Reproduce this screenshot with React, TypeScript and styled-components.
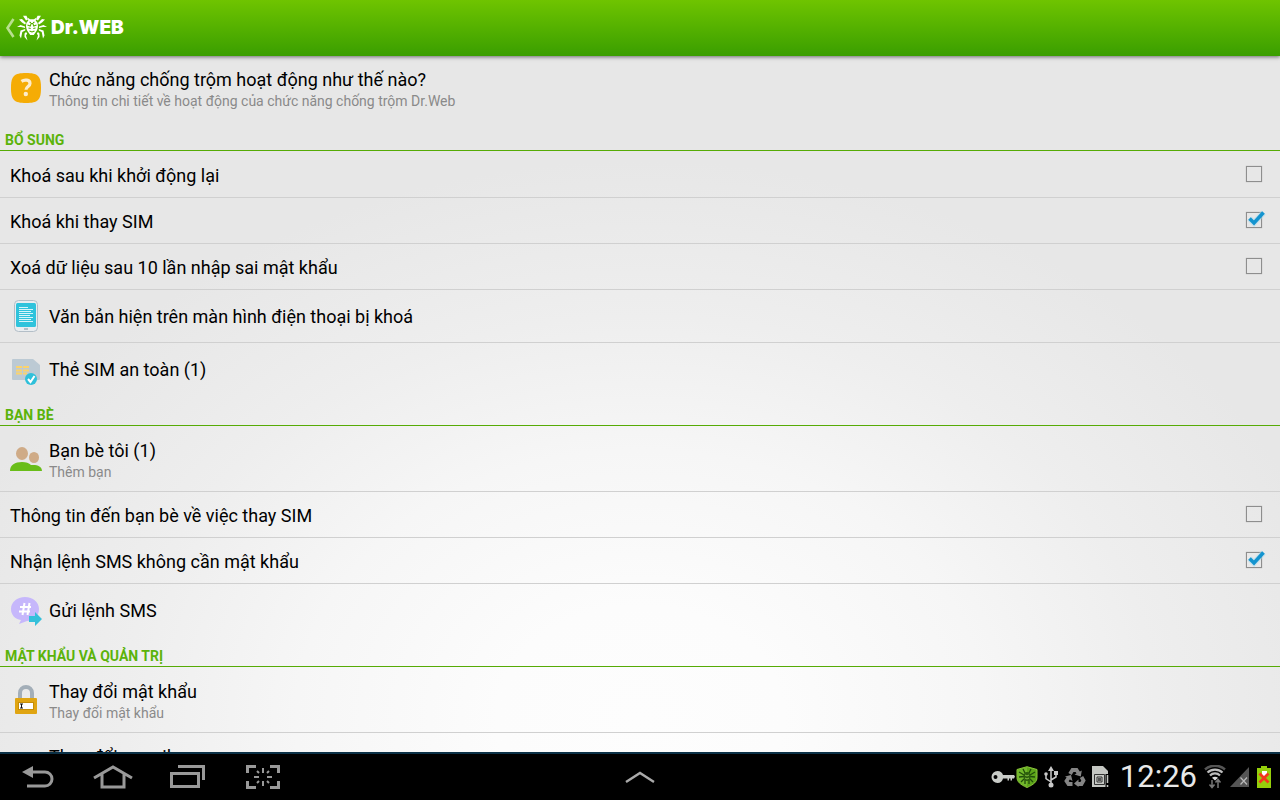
import React from 'react';
import styled, { createGlobalStyle, css } from 'styled-components';

const GlobalStyle = createGlobalStyle`
  * { box-sizing: border-box; }
  body {
    margin: 0;
    background: #000;
    font-family: Roboto, "Noto Sans", sans-serif;
    color: #000;
  }
  button, h1, h2, ul { margin: 0; padding: 0; font: inherit; }
`;

const Screen = styled.div`
  display: flex;
  flex-direction: column;
  height: 100vh;
  overflow: hidden;
`;

const ActionBar = styled.header`
  display: flex;
  align-items: center;
  flex: none;
  height: 56px;
  padding: 0 5px;
  background: linear-gradient(#6fc400, #3a9e00);
  box-shadow: 0 1px 4px rgba(0, 0, 0, 0.55);
  z-index: 1;
`;

const HomeButton = styled.button`
  display: flex;
  align-items: center;
  gap: 2px;
  border: 0;
  background: none;
  color: #fff;
`;

const Brand = styled.h1`
  margin-left: 2px;
  padding-bottom: 1px;
  font-family: Inter, Roboto, sans-serif;
  font-size: 19px;
  line-height: 24px;
  font-weight: 900;
`;

const Settings = styled.main`
  flex: 1;
  min-height: 0;
  overflow-y: auto;
  scrollbar-width: none;
  background: radial-gradient(ellipse 56% 80% at 50% 95%, #fdfdfd, #fcfcfc 20%, #f6f6f6 48%, #eeeeee 72%, #e7e7e7 100%);
`;

const SectionTitle = styled.h2`
  height: 30px;
  margin-bottom: 1px;
  padding: 11px 5px 0;
  border-bottom: 1px solid #56ab05;
  color: #5bb30a;
  font-size: 14px;
  line-height: 17px;
  font-weight: 700;
`;

const List = styled.ul`
  list-style: none;
`;

const Item = styled.li`
  border-bottom: 1px solid #d0d0d0;
  &:last-child { border-bottom-color: transparent; }
`;

const rowLayout = css`
  display: flex;
  align-items: center;
  width: 100%;
  border: 0;
  background: none;
  text-align: left;
`;

const IconRow = styled.button<{ $tall?: boolean }>`
  ${rowLayout}
  height: ${(p) => (p.$tall ? 64 : 52)}px;
  padding: 0 10px;
  gap: 7px;
`;

const CheckRow = styled.label`
  ${rowLayout}
  justify-content: space-between;
  height: 45px;
  padding: 0 18px 0 10px;
`;

const Texts = styled.span`
  display: flex;
  flex-direction: column;
  padding-top: 2px;
`;

const Title = styled.span`
  font-size: 18px;
  line-height: 24px;
`;

const Summary = styled.span`
  color: #8a8a8a;
  font-size: 14px;
  line-height: 18px;
`;

const Tick = styled.span`
  position: relative;
  display: flex;
  svg { position: absolute; left: -3px; top: -5px; pointer-events: none; visibility: hidden; }
  input:checked + svg { visibility: visible; }
`;

const Box = styled.input`
  appearance: none;
  width: 16px;
  height: 16px;
  margin: 0 0 1px;
  border: 1px solid #8e8e8e;
  box-shadow: 0 0 1px #aaa;
`;

const NavBar = styled.nav`
  display: grid;
  grid-template-columns: 1fr auto 1fr;
  align-items: center;
  flex: none;
  height: 48px;
  padding: 0 9px;
  border-top: 2px solid #0b3147;
  background: #000;
`;

const NavGroup = styled.div`
  display: flex;
  align-items: center;
  gap: 36px;
  padding-left: 11px;
`;

const NavButton = styled.button`
  display: flex;
  border: 0;
  background: none;
  color: #999;
`;

const Status = styled.div`
  display: flex;
  align-items: center;
  justify-content: flex-end;
`;

const StatusIcons = styled.div<{ $gap: number }>`
  display: flex;
  align-items: center;
  gap: ${(p) => p.$gap}px;
`;

const Clock = styled.time`
  margin: 0 7px 0 11px;
  color: #e8e8e8;
  font-size: 31px;
  line-height: 36px;
  font-weight: 400;
`;

const BackMark = () => (
  <svg width="10" height="20" viewBox="0 0 10 20" aria-hidden="true">
    <path d="M8.500 1 2.500 10l6 9" fill="none" stroke="#b9e08f" strokeWidth="2.600" />
  </svg>
);

const SpiderLogo = () => (
  <svg width="30" height="26" viewBox="0 0 30 26" aria-hidden="true">
    <path
      fill="#fff"
      d="M6 .8h3.500L11 4.500 9 5.500zM24 .8h-3.500L19 4.500l2 1zM2 4.500l3-.500 4 4-1 1.500L5 7.500zM28 4.500 25 4l-4 4 1 1.500 3-2zM0 12l3.500-2L8 11.500v1.500l-4-1zM30 12l-3.500-2-4.500 1.500v1.500l4-1zM8.200 14v1.500L5.300 17 4 23.500 2.500 20.500l1-5zM21.800 14v1.500l2.900 1.500L26 23.500l1.500-3-1-5zM9 17l1.200 1.500-1.200 2 1.500 5L7.500 22v-3.500zM21 17l-1.200 1.500 1.200 2-1.500 5 3-3.500v-3.500z"
    />
    <path d="M10.500 2.500 13 4.200h4l2.500-1.700-.8 3Q21.300 7.500 21 11c-.2 3.500-1.500 5.500-3 7.200L16.800 20h-3.600L12 18.200C10.500 16.500 9.200 14.500 9 11q-.3-3.500 2.300-5.500z" fill="#fff" />
    <path d="m10.500 10 2.700 1 1-2.500h1.600l1 2.500 2.700-1M11.500 13l2.200.500M18.500 13l-2.200.500M12.500 16l2.500 1 2.500-1M12.500 7l1.500.700M17.500 7l-1.500.700" fill="none" stroke="#55b000" strokeWidth="1.100" />
  </svg>
);

const HelpIcon = () => (
  <svg width="32" height="32" viewBox="0 0 32 32" aria-hidden="true">
    <path d="M16 1c12 0 15 3 15 15s-3 15-15 15S1 28 1 16 4 1 16 1z" fill="#f5ac05" />
    <path d="M11.500 9.300C14.500 7.300 20 7.600 20 11.500c0 3-4 3-4 6.300" fill="none" stroke="#fdeccb" strokeWidth="3.200" />
    <circle cx="15.800" cy="22" r="2.200" fill="#fdeccb" />
  </svg>
);

const TabletIcon = () => (
  <svg width="32" height="32" viewBox="0 0 32 32" aria-hidden="true">
    <rect x="4.500" y=".500" width="23" height="31" rx="4" fill="#e9edf0" stroke="#b3bec7" />
    <rect x="6" y="3" width="20" height="24" rx="1.500" fill="#2fc3dc" />
    <path d="M9 7.500h9M9 9.500h14M9 11.500h12M9 13.500h14M9 15.500h11M9 17.500h14M9 19.500h12M9 21.500h14" stroke="#d7f5fa" />
    <rect x="14" y="28" width="4" height="2" fill="#b3bec7" />
  </svg>
);

const SimIcon = () => (
  <svg width="32" height="32" viewBox="0 0 32 32" aria-hidden="true">
    <path d="M3 6h20l7 6v14a1 1 0 0 1-1 1H3a1 1 0 0 1-1-1V7a1 1 0 0 1 1-1z" fill="#bccad4" />
    <path d="M6 14h6M6 17.500h6M6 20.500h6M13 14h6M13 17.500h6M13 20.500h4" stroke="#fbd36c" strokeWidth="2" />
    <circle cx="21" cy="26" r="6" fill="#2fc0da" />
    <path d="m18 26 2.500 3 4-6" fill="none" stroke="#fff" strokeWidth="2" />
  </svg>
);

const FriendsIcon = () => (
  <svg width="32" height="32" viewBox="0 0 32 32" aria-hidden="true">
    <ellipse cx="12" cy="10.500" rx="6" ry="6.500" fill="#cfab87" />
    <ellipse cx="24" cy="14.500" rx="5" ry="5.500" fill="#cfab87" />
    <path d="M0 28c0-6 5-9 12-9 4 0 7 1 9 3 6-.5 11 1 11 6z" fill="#69bd19" />
  </svg>
);

const SmsIcon = () => (
  <svg width="32" height="32" viewBox="0 0 32 32" aria-hidden="true">
    <path d="M15 3c8 0 14 5 14 12s-5 12-12 12l-8 3 2-4C5 25 1 21 1 15 1 8 7 3 15 3z" fill="#c6b7fb" />
    <path d="m14.500 9-2 12M19.500 9l-2 12M10 13h11M9 17.500h11" stroke="#fff" strokeWidth="2" />
    <path d="M19 22h6v-4l7 7-7 7v-4h-6z" fill="#35c0da" />
  </svg>
);

const LockIcon = () => (
  <svg width="32" height="32" viewBox="0 0 32 32" aria-hidden="true">
    <path d="M10 14V9a6 6 0 0 1 12 0v5" fill="none" stroke="#a3aeb8" strokeWidth="4" />
    <rect x="5" y="14" width="22" height="16" rx="1" fill="#e0a512" />
    <rect x="8.500" y="18.500" width="15" height="7" fill="#fff" stroke="#c68d08" />
    <path d="M10 20h3M10 24h3M11.500 20v4" stroke="#111" />
  </svg>
);

const MailIcon = () => (
  <svg width="32" height="32" viewBox="0 0 32 32" aria-hidden="true">
    <rect x="2" y="7" width="28" height="19" rx="1" fill="#e0a512" />
    <path d="m3 8 13 10L29 8" fill="none" stroke="#fff" strokeWidth="2" />
  </svg>
);

const CheckMark = () => (
  <svg width="24" height="24" viewBox="0 0 24 24" aria-hidden="true">
    <path d="m6.500 11.500 4.500 4.500L20.500 5.500" fill="none" stroke="#a9dcf0" strokeWidth="6" opacity=".5" />
    <path d="m6.500 11.500 4.500 4.500L20.500 5.500" fill="none" stroke="#1494cf" strokeWidth="3.600" />
  </svg>
);

const KeyIcon = () => (
  <svg width="24" height="14" viewBox="0 0 24 14" aria-hidden="true">
    <path fillRule="evenodd" d="M6.500 1c3 0 5 2 5.500 4h11l1 1.500-1 2h-2v2h-1.500v-2H18v2h-1.500v-2H12c-.5 2.500-2.500 4.500-5.500 4.500a6 6 0 1 1 0-12zM4.500 5a2 2 0 1 0 0 4 2 2 0 1 0 0-4z" fill="#c9ccc8" />
  </svg>
);

const ShieldIcon = () => (
  <svg width="22" height="22" viewBox="0 0 22 22" aria-hidden="true">
    <path d="M11 .700 21 3.500v8c0 4-3 7-10 10-7-3-10-6-10-10v-8z" fill="#5da51a" stroke="#8cc63c" />
    <path d="M11 1v20C4 18 1.500 15 1.500 11V4z" fill="#72b82c" />
    <path d="m7 3 2 4M15 3l-2 4M3 6l5 3M19 6l-5 3M3 11l5-.500M19 11l-5-.500M5 16l3-3M17 16l-3-3M9 18v-4M13 18v-4" stroke="#204c0a" strokeWidth="1.300" />
    <ellipse cx="11" cy="10.500" rx="3.500" ry="4.500" fill="#2c5e0d" />
    <path d="m9 9 2 1 2-1M9 12l2 1 2-1" fill="none" stroke="#83bf3f" />
  </svg>
);

const UsbIcon = () => (
  <svg width="14" height="22" viewBox="0 0 14 22" aria-hidden="true">
    <path d="M7 4v14M7 16l-5-3.500V8M7 14l5-3V7" fill="none" stroke="#c9c9c9" strokeWidth="1.500" />
    <path d="m7 0 3 5H4z" fill="#c9c9c9" />
    <circle cx="7" cy="19" r="2.500" fill="#c9c9c9" />
    <circle cx="2" cy="8" r="1.800" fill="#c9c9c9" />
    <path d="M10 5h4v4h-4z" fill="#c9c9c9" />
  </svg>
);

const RecycleIcon = () => (
  <svg width="22" height="20" viewBox="0 0 22 20" aria-hidden="true">
    <g fill="none" stroke="#858585" strokeWidth="3.800">
      <path d="M6 7 8.500 3h4l2 3" />
      <path d="m17.500 10 2 3.500L17.500 17h-4" />
      <path d="M8.500 17h-4l-2-3L4.500 11" />
    </g>
    <path d="m17.800 3.500-1 6-6.300-2zM14.500 12.500v7.500l-4.500-3.500zM1 9.500l6-1.500 1.500 6z" fill="#858585" />
  </svg>
);

const SimAlertIcon = () => (
  <svg width="17" height="22" viewBox="0 0 17 22" aria-hidden="true">
    <path d="M0 0h11l5 5v16H0z" fill="#c4c6c2" />
    <path d="M2.500 8.500h10v10h-10zM5 11h5v5H5z" fill="none" stroke="#333" />
    <path d="M6 12h3v3H6z" fill="#555" />
    <path d="M13.500 8h3.500v14h-3.500z" fill="#000" />
    <path d="M15.500 9v8M15.500 19v2" stroke="#c4c6c2" strokeWidth="1.500" />
  </svg>
);

const WifiIcon = () => (
  <svg width="22" height="24" viewBox="0 0 22 24" aria-hidden="true">
    <path d="M1 4.500a15 15 0 0 1 20 0" fill="none" stroke="#555" strokeWidth="2.400" />
    <path d="M3.500 7.500a11 11 0 0 1 15 0M6 10.500a7 7 0 0 1 10 0" fill="none" stroke="#bdbdbd" strokeWidth="2.200" />
    <path d="m11 15.500-3-2.700q3-2 6 0z" fill="#ddd" />
    <path d="M8 15v8M5.500 19.500 8 22.500l2.500-3M14 23v-8M11.500 17.500l2.500-3 2.500 3" fill="none" stroke="#777" strokeWidth="1.500" />
  </svg>
);

const SignalIcon = () => (
  <svg width="19" height="20" viewBox="0 0 19 20" aria-hidden="true">
    <path d="M19 0v20H0z" fill="#555" />
    <path d="m10.500 10.500 6.500 7M17 10.500l-6.500 7" stroke="#bbb" strokeWidth="1.200" />
  </svg>
);

const BatteryIcon = () => (
  <svg width="14" height="22" viewBox="0 0 14 22" aria-hidden="true">
    <path d="M4 0h6v2h4v20H0V2h4z" fill="#95cf0b" />
    <path d="M5 5h5v5H5z" fill="#fff" />
    <path d="m2.500 7.500 9 9M11.500 7.500l-9 9" stroke="#f2391c" strokeWidth="2.800" />
  </svg>
);

type CheckProps = { label: string; on?: boolean };

const CheckItem = ({ label, on }: CheckProps) => (
  <Item>
    <CheckRow>
      <Texts>
        <Title>{label}</Title>
      </Texts>
      <Tick>
        <Box type="checkbox" defaultChecked={on} />
        <CheckMark />
      </Tick>
    </CheckRow>
  </Item>
);

type IconItemProps = { icon: React.ReactNode; title: string; summary?: string };

const IconItem = ({ icon, title, summary }: IconItemProps) => (
  <Item>
    <IconRow type="button" $tall={Boolean(summary)}>
      {icon}
      <Texts>
        <Title>{title}</Title>
        {summary && <Summary>{summary}</Summary>}
      </Texts>
    </IconRow>
  </Item>
);

export default function App() {
  return (
    <Screen>
      <GlobalStyle />
      <ActionBar>
        <HomeButton type="button">
          <BackMark />
          <SpiderLogo />
          <Brand>Dr.WEB</Brand>
        </HomeButton>
      </ActionBar>

      <Settings>
        <List>
          <IconItem
            icon={<HelpIcon />}
            title="Chức năng chống trộm hoạt động như thế nào?"
            summary="Thông tin chi tiết về hoạt động của chức năng chống trộm Dr.Web"
          />
        </List>

        <SectionTitle>BỔ SUNG</SectionTitle>
        <List>
          <CheckItem label="Khoá sau khi khởi động lại" />
          <CheckItem label="Khoá khi thay SIM" on />
          <CheckItem label="Xoá dữ liệu sau 10 lần nhập sai mật khẩu" />
          <IconItem icon={<TabletIcon />} title="Văn bản hiện trên màn hình điện thoại bị khoá" />
          <IconItem icon={<SimIcon />} title="Thẻ SIM an toàn (1)" />
        </List>

        <SectionTitle>BẠN BÈ</SectionTitle>
        <List>
          <IconItem icon={<FriendsIcon />} title="Bạn bè tôi (1)" summary="Thêm bạn" />
          <CheckItem label="Thông tin đến bạn bè về việc thay SIM" />
          <CheckItem label="Nhận lệnh SMS không cần mật khẩu" on />
          <IconItem icon={<SmsIcon />} title="Gửi lệnh SMS" />
        </List>

        <SectionTitle>MẬT KHẨU VÀ QUẢN TRỊ</SectionTitle>
        <List>
          <IconItem icon={<LockIcon />} title="Thay đổi mật khẩu" summary="Thay đổi mật khẩu" />
          <IconItem icon={<MailIcon />} title="Thay đổi e-mail" summary="Thay đổi e-mail" />
        </List>
      </Settings>

      <NavBar>
        <NavGroup>
          <NavButton type="button" aria-label="Back">
            <svg width="37" height="26" viewBox="0 0 37 26">
              <path d="M12 8h13a7 7 0 0 1 0 14H7" fill="none" stroke="currentColor" strokeWidth="3" />
              <path d="M2 8 13 2v12z" fill="currentColor" />
            </svg>
          </NavButton>
          <NavButton type="button" aria-label="Home">
            <svg width="40" height="26" viewBox="0 0 40 26">
              <path d="M1 14 20 3l19 11M9 10v13h22V10" fill="none" stroke="currentColor" strokeWidth="3" />
            </svg>
          </NavButton>
          <NavButton type="button" aria-label="Recent apps">
            <svg width="37" height="26" viewBox="-1 0 37 26">
              <path d="M1.500 9.500h27v13h-27zM8 2.500h25.500V16" fill="none" stroke="currentColor" strokeWidth="3" />
            </svg>
          </NavButton>
          <NavButton type="button" aria-label="Screenshot">
            <svg width="42" height="26" viewBox="0 0 42 26">
              <path d="M5.500 9V2.500H14M28 2.500h8.500V9M36.500 17v6.500H28M14 23.500H5.500V17" fill="none" stroke="currentColor" strokeWidth="3" />
              <path d="M21 4v5M21 17v5M12 13h5M25 13h5M15 7l2 2M27 7l-2 2M15 19l2-2M27 19l-2-2" stroke="currentColor" strokeWidth="2" />
            </svg>
          </NavButton>
        </NavGroup>
        <NavButton type="button" aria-label="Show tray">
          <svg width="30" height="14" viewBox="0 0 30 14">
            <path d="M1 12 15 3l14 9" fill="none" stroke="#aaa" strokeWidth="2.400" />
          </svg>
        </NavButton>
        <Status>
          <StatusIcons $gap={6}>
            <StatusIcons $gap={1}>
              <KeyIcon />
              <ShieldIcon />
            </StatusIcons>
            <UsbIcon />
            <RecycleIcon />
            <SimAlertIcon />
          </StatusIcons>
          <Clock>12:26</Clock>
          <StatusIcons $gap={8}>
            <StatusIcons $gap={4}>
              <WifiIcon />
              <SignalIcon />
            </StatusIcons>
            <BatteryIcon />
          </StatusIcons>
        </Status>
      </NavBar>
    </Screen>
  );
}
